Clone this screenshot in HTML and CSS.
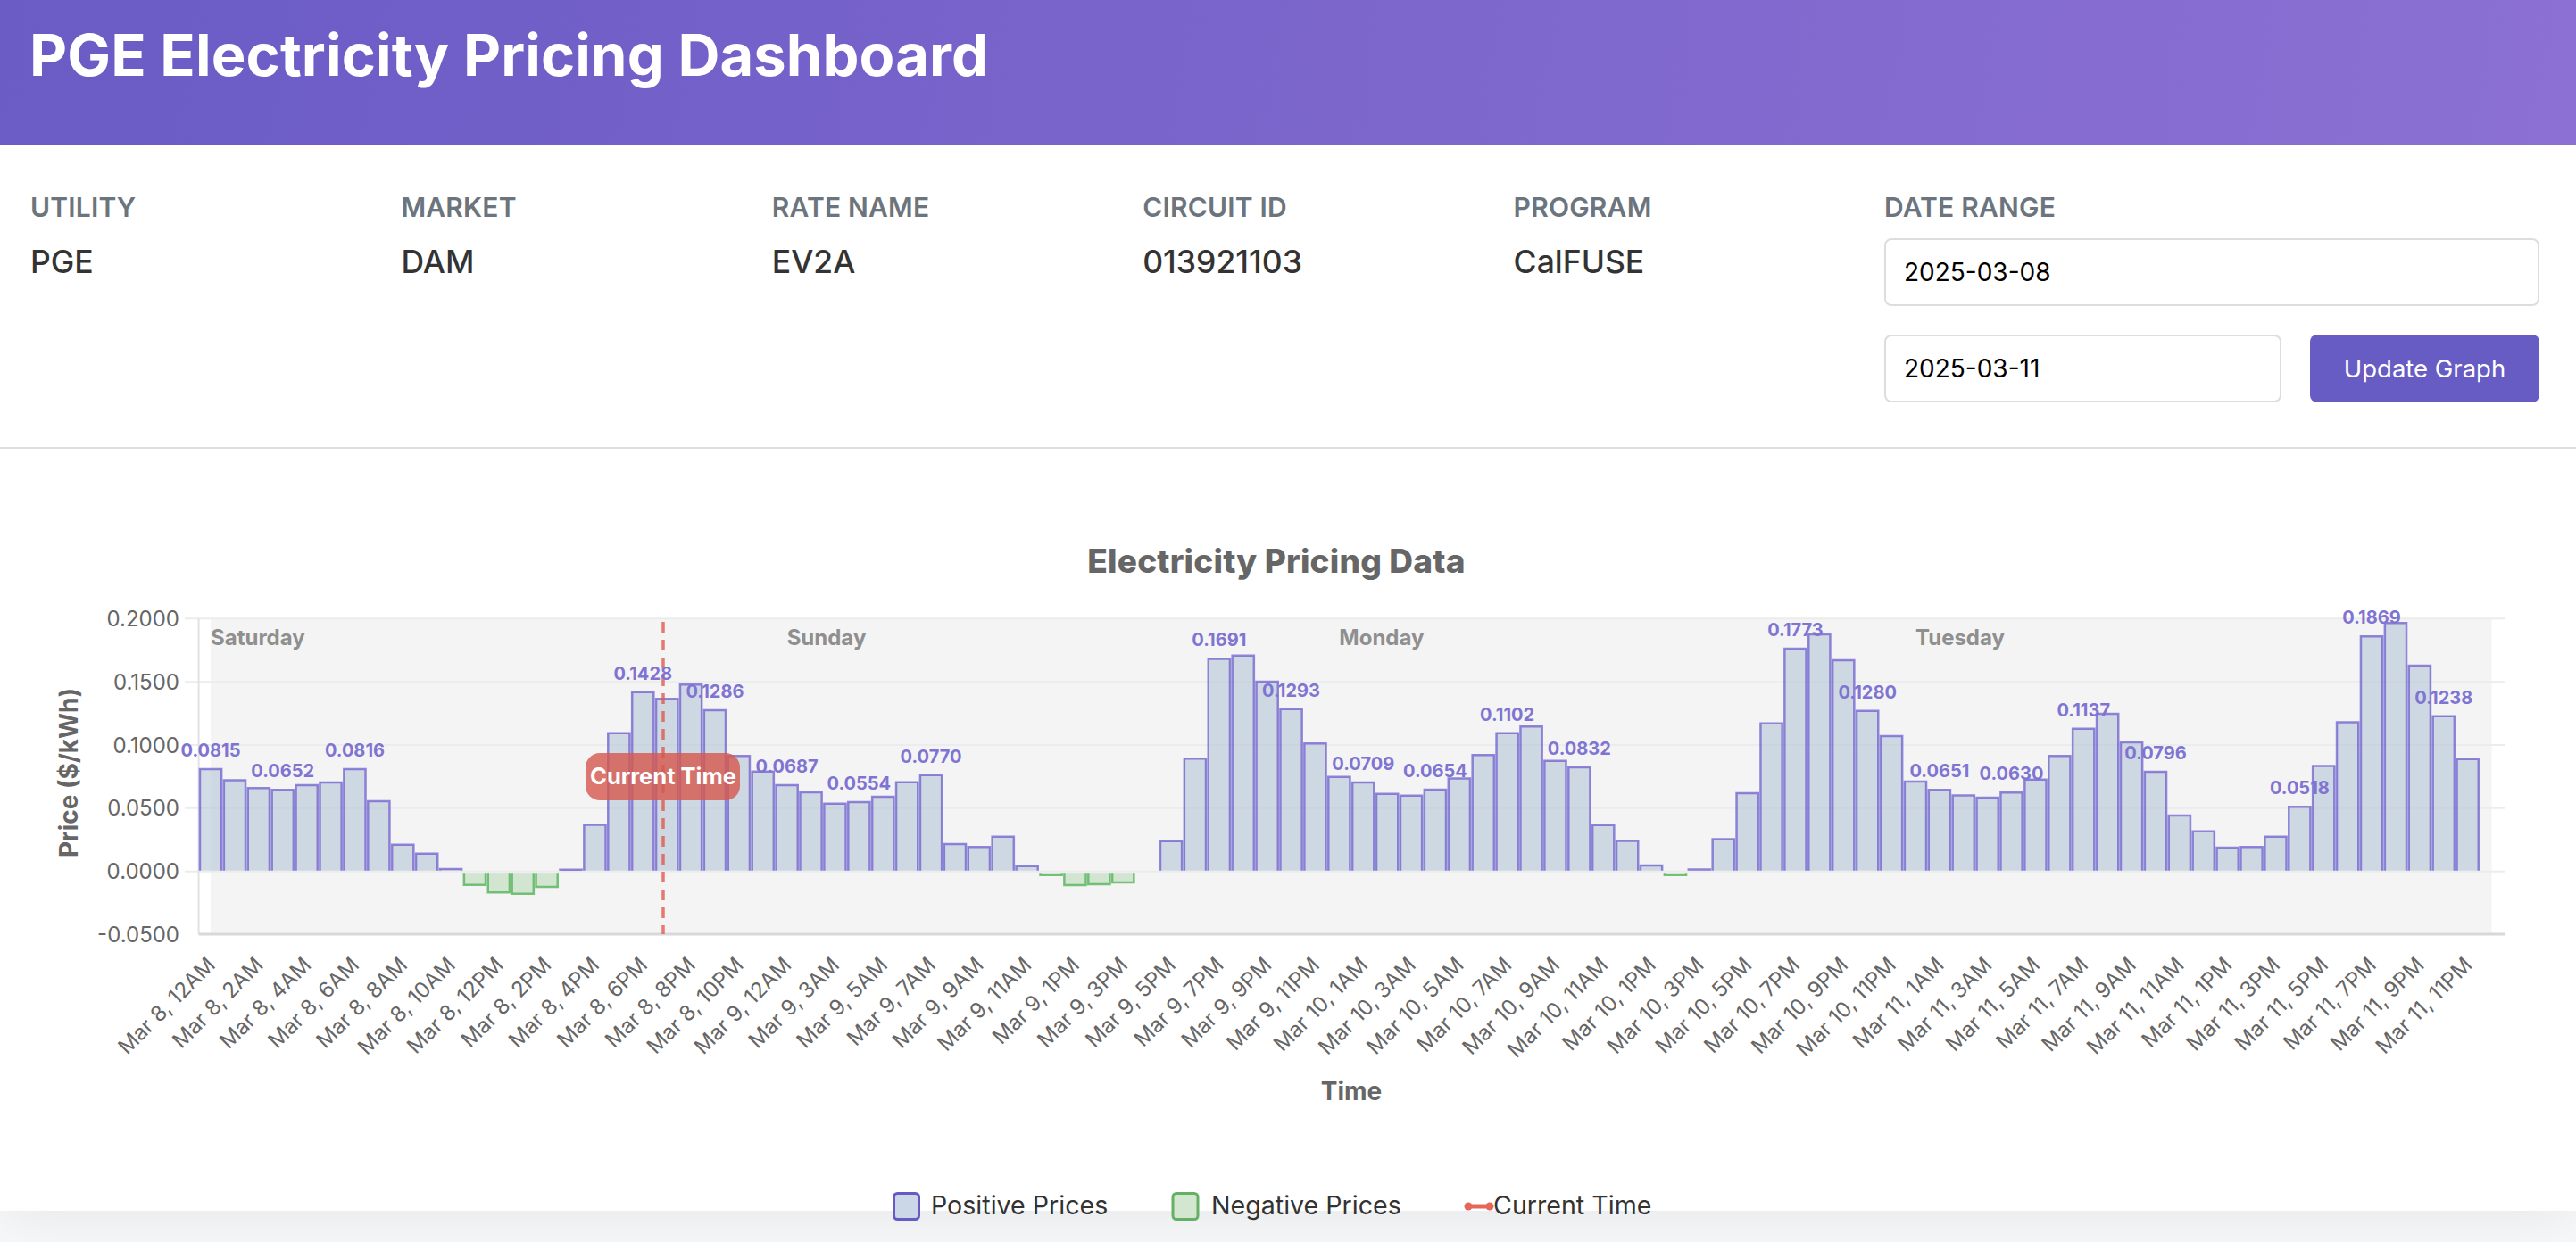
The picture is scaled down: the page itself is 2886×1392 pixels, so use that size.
FILE: index.html
```html
<!DOCTYPE html>
<html lang="en">
<head>
  <meta charset="UTF-8" />
  <title>PGE Electricity Pricing Dashboard</title>
  <link rel="stylesheet" href="styles.css">
</head>
<body>
  <div class="dashboard">
    <header class="topbar">
      <h1>PGE Electricity Pricing Dashboard</h1>
    </header>

    <section class="info">
      <div class="info-item"><div class="info-label">Utility</div><div class="info-value">PGE</div></div>
      <div class="info-item"><div class="info-label">Market</div><div class="info-value">DAM</div></div>
      <div class="info-item"><div class="info-label">Rate Name</div><div class="info-value">EV2A</div></div>
      <div class="info-item"><div class="info-label">Circuit ID</div><div class="info-value">013921103</div></div>
      <div class="info-item"><div class="info-label">Program</div><div class="info-value">CalFUSE</div></div>
      <div class="info-item">
        <div class="info-label">Date Range</div>
        <div class="date-range">
          <input class="date-input date-wide" type="text" value="2025-03-08">
          <input class="date-input" type="text" value="2025-03-11">
          <button class="update-btn" type="button">Update Graph</button>
        </div>
      </div>
    </section>

    <section class="chart-section">
      <svg class="chart" id="chart" viewBox="0 503 2886 889" width="2886" height="889"></svg>
    </section>
  </div>

  <script>
    // one price per hour, Mar 8 12AM to Mar 11 11PM (Mar 9 only has 23 hours)
    const prices = [
      0.0810, 0.0722, 0.0659, 0.0645, 0.0682, 0.0704, 0.0810, 0.0555, 0.0212, 0.0141,
      0.0019, -0.0106, -0.0167, -0.0176, -0.0122, 0.0014, 0.0369, 0.1094, 0.1419, 0.1365,
      0.1478, 0.1275, 0.0913, 0.0791, 0.0682, 0.0626, 0.0536, 0.0548, 0.0591, 0.0706,
      0.0762, 0.0216, 0.0193, 0.0275, 0.0042, -0.0028, -0.0108, -0.0101, -0.0087, null,
      0.0240, 0.0892, 0.1682, 0.1708, 0.1501, 0.1285, 0.1012, 0.0748, 0.0704, 0.0614,
      0.0600, 0.0647, 0.0736, 0.0920, 0.1094, 0.1146, 0.0875, 0.0824, 0.0367, 0.0242,
      0.0047, -0.0028, 0.0016, 0.0256, 0.0619, 0.1172, 0.1762, 0.1875, 0.1671, 0.1271,
      0.1071, 0.0711, 0.0645, 0.0602, 0.0584, 0.0624, 0.0727, 0.0913, 0.1129, 0.1247,
      0.1021, 0.0788, 0.0442, 0.0318, 0.0188, 0.0193, 0.0275, 0.0511, 0.0835, 0.1181,
      0.1859, 0.1965, 0.1628, 0.1228, 0.0889
    ];

    const priceLabels = {
      0: '0.0815', 3: '0.0652', 6: '0.0816', 18: '0.1428', 21: '0.1286', 24: '0.0687',
      27: '0.0554', 30: '0.0770', 42: '0.1691', 45: '0.1293', 48: '0.0709', 51: '0.0654',
      54: '0.1102', 57: '0.0832', 66: '0.1773', 69: '0.1280', 72: '0.0651', 75: '0.0630',
      78: '0.1137', 81: '0.0796', 87: '0.0518', 90: '0.1869', 93: '0.1238'
    };

    const timeLabels = [
      'Mar 8, 12AM', 'Mar 8, 2AM', 'Mar 8, 4AM', 'Mar 8, 6AM', 'Mar 8, 8AM', 'Mar 8, 10AM',
      'Mar 8, 12PM', 'Mar 8, 2PM', 'Mar 8, 4PM', 'Mar 8, 6PM', 'Mar 8, 8PM', 'Mar 8, 10PM',
      'Mar 9, 12AM', 'Mar 9, 3AM', 'Mar 9, 5AM', 'Mar 9, 7AM', 'Mar 9, 9AM', 'Mar 9, 11AM',
      'Mar 9, 1PM', 'Mar 9, 3PM', 'Mar 9, 5PM', 'Mar 9, 7PM', 'Mar 9, 9PM', 'Mar 9, 11PM',
      'Mar 10, 1AM', 'Mar 10, 3AM', 'Mar 10, 5AM', 'Mar 10, 7AM', 'Mar 10, 9AM', 'Mar 10, 11AM',
      'Mar 10, 1PM', 'Mar 10, 3PM', 'Mar 10, 5PM', 'Mar 10, 7PM', 'Mar 10, 9PM', 'Mar 10, 11PM',
      'Mar 11, 1AM', 'Mar 11, 3AM', 'Mar 11, 5AM', 'Mar 11, 7AM', 'Mar 11, 9AM', 'Mar 11, 11AM',
      'Mar 11, 1PM', 'Mar 11, 3PM', 'Mar 11, 5PM', 'Mar 11, 7PM', 'Mar 11, 9PM', 'Mar 11, 11PM'
    ];

    const days = [['Saturday', 0], ['Sunday', 24], ['Monday', 47], ['Tuesday', 71]];

    const plot = { left: 222.6, right: 2806, top: 693.4, bottom: 1047, zero: 976.7 };
    const step = 26.9;
    const barWidth = 24.2;
    const pxPerDollar = 1416.7;
    const centerX = (i) => plot.left + step * (i + 0.5);
    const valueY = (v) => plot.zero - v * pxPerDollar;

    const chart = document.getElementById('chart');

    function add(tag, attrs, text, parent) {
      const el = document.createElementNS('http://www.w3.org/2000/svg', tag);
      Object.keys(attrs).forEach((k) => el.setAttribute(k, attrs[k]));
      if (text) el.textContent = text;
      (parent || chart).appendChild(el);
      return el;
    }

    // plot background + grid
    add('rect', { class: 'plot-bg', x: centerX(0), y: plot.top, width: centerX(95) - centerX(0), height: plot.bottom - plot.top });
    [0.2, 0.15, 0.1, 0.05, 0].forEach((v) => {
      const y = valueY(v);
      add('line', { class: 'grid-line', x1: 207, x2: plot.right, y1: y, y2: y });
    });
    add('line', { class: 'axis-y', x1: plot.left, x2: plot.left, y1: plot.top, y2: plot.bottom });
    add('line', { class: 'axis-x', x1: plot.left, x2: plot.right, y1: plot.bottom, y2: plot.bottom });
    [0.2, 0.15, 0.1, 0.05, 0, -0.05].forEach((v) => {
      add('text', { class: 'tick-y', x: 201, y: valueY(v) + 8.5 }, v.toFixed(4));
    });

    // day names
    days.forEach(([name, i]) => {
      add('text', { class: 'day-label', x: centerX(i), y: 723 }, name);
    });

    // bars, open at the baseline
    prices.forEach((v, i) => {
      if (v === null) return;
      const x = centerX(i) - barWidth / 2;
      const base = v < 0 ? plot.zero + 1.5 : plot.zero - 1;
      const d = `M${x} ${base}V${valueY(v)}H${x + barWidth}V${base}`;
      add('path', { class: v < 0 ? 'bar bar-neg' : 'bar bar-pos', d: d });
    });

    // current time marker
    add('line', { class: 'now-line', x1: 743, x2: 743, y1: 697, y2: plot.bottom });
    add('rect', { class: 'now-badge', x: 656, y: 844, width: 173, height: 53, rx: 16 });
    add('text', { class: 'now-text', x: 743, y: 879 }, 'Current Time');

    // price labels
    Object.keys(priceLabels).forEach((i) => {
      add('text', { class: 'price-label', x: centerX(+i), y: valueY(prices[i]) - 14 }, priceLabels[i]);
    });

    // x ticks
    timeLabels.forEach((label, n) => {
      const x = centerX(n * 2) + 6.5;
      add('text', { class: 'tick-x', transform: `translate(${x} 1083) rotate(-45)` }, label);
    });

    // titles
    add('text', { class: 'chart-title', x: 1430, y: 642 }, 'Electricity Pricing Data');
    add('text', { class: 'axis-title', transform: 'translate(87 866) rotate(-90)' }, 'Price ($/kWh)');
    add('text', { class: 'axis-title', x: 1514, y: 1233 }, 'Time');

    // legend
    add('rect', { class: 'swatch swatch-pos', x: 1001.5, y: 1337.5, width: 28, height: 29, rx: 4 });
    add('text', { class: 'legend-text', x: 1043, y: 1361 }, 'Positive Prices');
    add('rect', { class: 'swatch swatch-neg', x: 1314, y: 1337.5, width: 28, height: 29, rx: 4 });
    add('text', { class: 'legend-text', x: 1357, y: 1361 }, 'Negative Prices');
    add('line', { class: 'swatch-line', x1: 1643, x2: 1671, y1: 1352, y2: 1352 });
    add('circle', { class: 'swatch-dot', cx: 1645, cy: 1352, r: 4.5 });
    add('circle', { class: 'swatch-dot', cx: 1669, cy: 1352, r: 4.5 });
    add('text', { class: 'legend-text', x: 1673, y: 1361 }, 'Current Time');
  </script>
</body>
</html>
```

FILE: styles.css
```css
html, body {
  margin: 0;
  height: 100%;
  overflow: hidden;
}

body {
  font-family: Inter, "Noto Sans", sans-serif;
  background-color: #f7f8f9;
  color: #333;
}

.dashboard {
  height: 1357px;
  background-color: #fff;
  box-shadow: 0 8px 60px rgba(0, 0, 0, 0.07);
}

/* header */
.topbar {
  height: 162px;
  box-sizing: border-box;
  padding: 30px 33px 0;
  color: #fff;
  background: linear-gradient(100deg, #6a5bc5, #8c70d3);
}

.topbar h1 {
  margin: 0;
  font-size: 65px;
  line-height: 64px;
  font-weight: 700;
  letter-spacing: 0.13px;
}

/* info row */
.info {
  display: grid;
  grid-template-columns: repeat(5, 1fr) 734px;
  height: 339px;
  box-sizing: content-box;
  padding: 0 41px 0 34px;
  border-bottom: 2px solid #ddd;
}

.info-item {
  padding-top: 50px;
}

.info-label {
  font-size: 30px;
  line-height: 40px;
  font-weight: 600;
  letter-spacing: 0.2px;
  text-transform: uppercase;
  color: #6c757d;
}

.info-value {
  margin-top: 20px;
  font-size: 35.5px;
  line-height: 44px;
  font-weight: 500;
}

.date-range {
  display: flex;
  flex-wrap: wrap;
  column-gap: 32px;
  row-gap: 32px;
  margin-top: 15px;
}

.date-input {
  width: 445px;
  height: 76px;
  box-sizing: border-box;
  padding: 0 20px;
  border: 2px solid #ddd;
  border-radius: 8px;
  font-family: Inter, sans-serif;
  font-size: 28px;
  color: #000;
  background-color: #fff;
}

.date-wide {
  width: 100%;
}

.update-btn {
  width: 257px;
  height: 76px;
  border: 0;
  border-radius: 8px;
  font-family: Inter, sans-serif;
  font-size: 27.5px;
  color: #fff;
  background-color: #675bc4;
}

/* chart */
.chart {
  display: block;
  overflow: visible;
}

.chart text {
  font-family: Inter, "Noto Sans", sans-serif;
}

.plot-bg {
  fill: #f4f4f4;
}

.grid-line {
  stroke: #ececec;
  stroke-width: 2;
}

.axis-y {
  stroke: #e2e2e2;
  stroke-width: 2;
}

.axis-x {
  stroke: #d8d8d8;
  stroke-width: 3;
}

.tick-y {
  font-size: 24px;
  fill: #666;
  text-anchor: end;
}

.tick-x {
  font-size: 24px;
  fill: #666;
  text-anchor: end;
}

.day-label {
  font-size: 24px;
  font-weight: 700;
  fill: #8f8f8f;
}

.bar {
  stroke-width: 2.5;
}

.bar-pos {
  fill: rgba(178, 197, 214, 0.6);
  stroke: rgba(106, 90, 205, 0.72);
}

.bar-neg {
  fill: rgba(144, 200, 144, 0.35);
  stroke: rgba(76, 175, 80, 0.75);
}

.price-label {
  font-size: 20px;
  font-weight: 700;
  fill: #8074d3;
  text-anchor: middle;
}

.now-line {
  stroke: rgba(222, 90, 80, 0.8);
  stroke-width: 3.5;
  stroke-dasharray: 12 8;
}

.now-badge {
  fill: rgba(214, 88, 78, 0.8);
}

.now-text {
  font-size: 25.5px;
  font-weight: 700;
  fill: #fff;
  text-anchor: middle;
}

.chart-title {
  font-size: 37px;
  font-weight: 800;
  letter-spacing: 0.2px;
  fill: #666;
  text-anchor: middle;
}

.axis-title {
  font-size: 28px;
  font-weight: 700;
  fill: #666;
  text-anchor: middle;
}

.legend-text {
  font-size: 28.6px;
  fill: #333;
}

.swatch {
  stroke-width: 3;
}

.swatch-pos {
  fill: #cbd7e6;
  stroke: #665bc4;
}

.swatch-neg {
  fill: #d2e6d0;
  stroke: #66b066;
}

.swatch-line {
  stroke: #e5675a;
  stroke-width: 5;
}

.swatch-dot {
  fill: #e5675a;
}
```
